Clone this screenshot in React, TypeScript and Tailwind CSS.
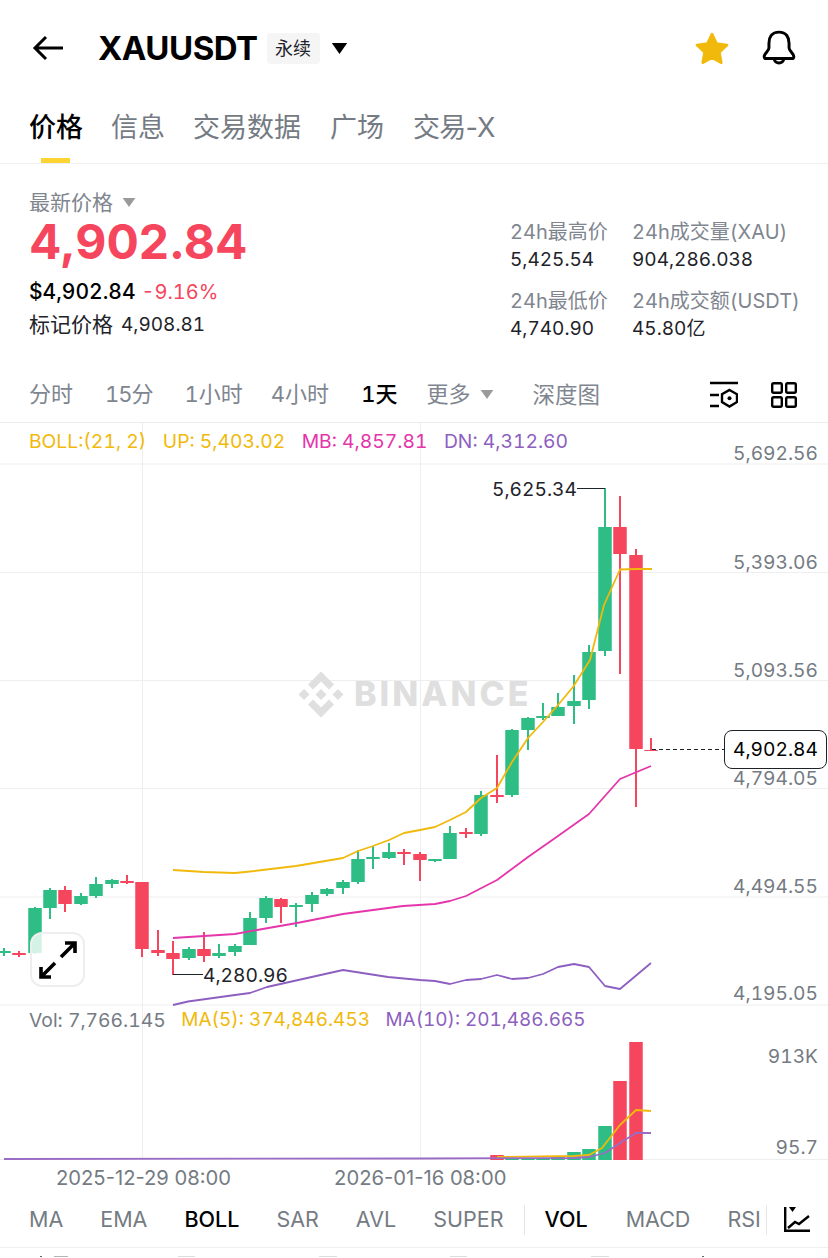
const GREEN = "#2ebd85";
const RED = "#f6465d";

// x, bodyTop, bodyBottom, wickTop, wickBottom, colour
const candles: [number, number, number, number, number, 0 | 1][] = [
  [4, 951, 953, 948, 956, 0],
  [19, 953, 955, 951, 957, 1],
  [35, 908, 953, 907, 954, 0],
  [50, 890, 908, 888, 919, 0],
  [65, 890, 904, 886, 912, 1],
  [81, 896, 904, 893, 905, 0],
  [96, 884, 896, 877, 898, 0],
  [112, 880, 884, 879, 888, 0],
  [127, 881, 883, 875, 884, 1],
  [142, 882, 949, 882, 957, 1],
  [158, 950, 953, 930, 956, 1],
  [173, 953, 959, 941, 975, 1],
  [189, 949, 958, 947, 960, 0],
  [204, 949, 956, 932, 962, 1],
  [219, 953, 956, 944, 958, 0],
  [235, 946, 952, 944, 956, 0],
  [250, 918, 945, 912, 945, 0],
  [266, 898, 918, 896, 923, 0],
  [281, 899, 907, 898, 923, 1],
  [296, 905, 907, 903, 927, 0],
  [312, 895, 904, 892, 912, 0],
  [327, 889, 894, 888, 896, 0],
  [343, 882, 888, 880, 894, 0],
  [358, 859, 882, 850, 884, 0],
  [373, 857, 859, 846, 869, 0],
  [389, 852, 858, 843, 859, 0],
  [404, 852, 854, 849, 865, 1],
  [420, 854, 860, 852, 881, 1],
  [435, 859, 861, 859, 862, 0],
  [450, 833, 859, 826, 859, 0],
  [466, 832, 834, 828, 838, 1],
  [481, 795, 834, 791, 836, 0],
  [497, 795, 797, 755, 803, 1],
  [512, 730, 795, 729, 797, 0],
  [528, 718, 730, 717, 750, 0],
  [543, 716, 718, 703, 720, 0],
  [558, 707, 716, 693, 716, 0],
  [574, 701, 706, 675, 724, 0],
  [589, 652, 700, 645, 709, 0],
  [605, 527, 651, 488, 656, 0],
  [620, 527, 554, 496, 674, 1],
  [636, 555, 749, 549, 807, 1],
  [651, 750, 751, 738, 751, 1],
];

const up = "173,870 204,872 235,873 250,871.5 296,866 343,858 358,851 373,846 389,840 404,833 420,830 435,827 450,820 466,812 481,798 497,788 512,762 528,738 543,722 558,705 573,687 590,660 604,605 620,569.5 636,569 652,569";
const mb = "173,938 204,936 235,934 257,930 297,923 343,914 373,910 403,906 435,904 450,901 466,896 497,880 528,857 558,836 589,814 620,779 651,766";
const dn = "173,1005 188,1001.5 235,995 250,993 267,987 343,970 388,977 420,980 435,981 450,984 466,980 481,979 497,975 512,979 528,978 543,974 558,967 574,964 589,967 605,986 620,989 651,963";
const volMa5 = "497,1157 574,1156 589,1155 602,1148 620,1125 636,1110 651,1111";
const volMa10 = "4,1159 420,1158.5 574,1158 589,1157 605,1153 620,1143 636,1133 651,1133";

const volBars: [number, number, 0 | 1][] = [
  [497, 1155, 1],
  [512, 1158, 0],
  [528, 1158, 0],
  [543, 1158, 0],
  [558, 1157, 0],
  [574, 1152, 0],
  [589, 1149, 0],
  [605, 1126, 0],
  [620, 1081, 1],
  [636, 1042, 1],
];

const axis: [string, number][] = [
  ["5,692.56", 453],
  ["5,393.06", 562],
  ["5,093.56", 670],
  ["4,794.05", 778],
  ["4,494.55", 886],
  ["4,195.05", 993],
  ["913K", 1056],
  ["95.7", 1147],
];

const sans = "font-['Inter','Noto_Sans_CJK_SC',sans-serif]";

function Caret({ className }: { className: string }) {
  return (
    <svg viewBox="0 0 14 10" className={className}>
      <path d="M0 0H14L7 10Z" fill="currentColor" />
    </svg>
  );
}

function Stat({ label, value }: { label: string; value: string }) {
  return (
    <div className="flex flex-col">
      <span className="h-[27px] text-[20px] leading-[27px] text-[#80868f] whitespace-nowrap">{label}</span>
      <span className="h-[27px] text-[19px] leading-[27px] text-[#1e2329] whitespace-nowrap">{value}</span>
    </div>
  );
}

function Chart() {
  return (
    <svg viewBox="0 423 828 737" className="absolute inset-0 h-full w-full">
      {[464, 572.5, 680.5, 788.5, 897, 1005, 1159.5].map((y) => (
        <line key={y} x1="0" x2="828" y1={y} y2={y} stroke="#eeeeee" />
      ))}
      <line x1="142.5" x2="142.5" y1="423" y2="1160" stroke="#eeeeee" />
      <line x1="420.5" x2="420.5" y1="423" y2="1160" stroke="#eeeeee" />

      {/* Binance mark */}
      <g fill="#dfdfdf" transform="translate(321 694.5)">
        <path d="M-5.5 0 0-5.5 5.5 0 0 5.5Z" />
        <path d="M-22.5 0-17 -5.5-11.5 0-17 5.500Z" />
        <path d="M22.500 0 17 -5.500 11.500 0 17 5.500Z" />
        <path d="M0-23 13-10 8-5 0-13-8-5-13-10Z" />
        <path d="M0 23 13 10 8 5 0 13-8 5-13 10Z" />
      </g>

      {candles.map(([x, t, b, wt, wb, c]) => (
        <g key={x} fill={c ? RED : GREEN}>
          <rect x={x - 1} y={wt} width="2" height={wb - wt} />
          <rect x={x - 6.75} y={t} width="13.5" height={b - t} />
        </g>
      ))}

      {volBars.map(([x, t, c]) => (
        <rect key={x} x={x - 6.75} y={t} width="13.5" height={1160 - t} fill={c ? RED : GREEN} />
      ))}

      <g fill="none" strokeWidth="1.800" strokeLinejoin="round">
        <polyline points={up} stroke="#f0b90b" />
        <polyline points={mb} stroke="#e535ab" />
        <polyline points={dn} stroke="#8d5fc0" />
        <polyline points={volMa5} stroke="#f0b90b" />
        <polyline points={volMa10} stroke="#9a6cc6" />
      </g>

      <path d="M605 488.500H577" stroke="#1e2329" fill="none" />
      <path d="M173 974.500H203" stroke="#1e2329" fill="none" />
      <path d="M652 749.500H724" stroke="#1e2329" strokeDasharray="4 3" fill="none" />
    </svg>
  );
}

export default function App() {
  return (
    <div className={`h-[1258px] w-[828px] overflow-hidden bg-white tabular-nums ${sans}`}>
      {/* Header */}
      <header className="flex h-[96px] items-center pl-[32px] pr-[31px]">
        <svg viewBox="0 0 32 26" className="h-[26px] w-[32px] text-black" fill="none" stroke="currentColor" strokeWidth="3">
          <path d="M31 13H3M14 2 3 13 14 24" />
        </svg>
        <h1 className="ml-[34px] text-[33px] font-bold leading-none tracking-[-0.5px] text-black">XAUUSDT</h1>
        <span className="ml-[9px] flex h-[31px] w-[53px] items-center justify-center rounded-[4px] bg-[#f5f5f5] text-[18px] text-[#1e2329]">永续</span>
        <Caret className="ml-[11px] h-[11px] w-[17px] text-black" />
        <svg viewBox="0 0 24 24" className="ml-auto h-[36px] w-[36px]">
          <path d="M12 2.800 15 9.100 22 10 16.900 14.900 18.200 21.800 12 18.400 5.800 21.800 7.100 14.900 2 10 9 9.100Z" fill="#f0b90b" stroke="#f0b90b" strokeWidth="1.800" strokeLinejoin="round" />
        </svg>
        <svg viewBox="0 0 34 34" className="ml-[31px] h-[36px] w-[36px]" fill="none" stroke="black" strokeWidth="2.800" strokeLinejoin="round">
          <path d="M17 2C10 2 7.500 7 7.500 12.500V17C7.500 20 3 22 3 25C3 26.500 4 27 5 27H29C30 27 31 26.500 31 25C31 22 26.500 20 26.500 17V12.500C26.500 7 24 2 17 2Z" />
          <path d="M12.500 27C12.500 32.500 21.500 32.500 21.500 27" />
        </svg>
      </header>

      {/* Tabs */}
      <nav className="flex h-[68px] items-start border-b border-[#f0f0f0] pl-[29px] text-[27px] leading-[63px] text-[#757b83] normal-nums">
        <div className="relative mr-[28px] h-[67px] font-medium text-black">
          价格
          <div className="absolute bottom-0 left-[12px] h-[5px] w-[29px] bg-[#fcd535]" />
        </div>
        <span className="mr-[28px]">信息</span>
        <span className="mr-[29px]">交易数据</span>
        <span className="mr-[29px]">广场</span>
        <span className="tracking-[-0.8px]">交易-X</span>
      </nav>

      {/* Price */}
      <section className="flex h-[195px] justify-between pl-[29px] pr-[31px] pt-[24px]">
        <div className="flex flex-col">
          <div className="flex h-[29px] items-center text-[21px] text-[#80868f]">
            最新价格
            <Caret className="ml-[9px] h-[9px] w-[14px] text-[#9a9a9a]" />
          </div>
          <div className="h-[50px] text-[48px] font-bold leading-[50px] text-[#f6465d] normal-nums">4,902.84</div>
          <div className="mt-[11px] flex h-[28px] items-center text-[21px]">
            <span className="font-medium text-black">$4,902.84</span>
            <span className="ml-[6px] text-[20px] text-[#f6465d]">-9.16%</span>
          </div>
          <div className="mt-[5px] flex h-[28px] items-center text-[21px] text-[#1e2329]">
            标记价格
            <span className="ml-[8px] text-[19px]">4,908.81</span>
          </div>
        </div>
        <div className="grid grid-cols-[122px_165px] content-start gap-y-[15px] pt-[31px]">
          <Stat label="24h最高价" value="5,425.54" />
          <Stat label="24h成交量(XAU)" value="904,286.038" />
          <Stat label="24h最低价" value="4,740.90" />
          <Stat label="24h成交额(USDT)" value="45.80亿" />
        </div>
      </section>

      {/* Timeframes */}
      <div className="flex h-[64px] items-center border-b border-[#ececec] pl-[29px] pr-[31px] pt-[8px] text-[22px] text-[#80868f]">
        <span>分时</span>
        <span className="ml-[32px] tracking-[-1px]">15分</span>
        <span className="ml-[32px]">1小时</span>
        <span className="ml-[28px]">4小时</span>
        <span className="ml-[32px] font-medium text-black">1天</span>
        <span className="ml-[29px] flex items-center">
          更多
          <Caret className="ml-[10px] h-[9px] w-[14px] text-[#9a9a9a]" />
        </span>
        <span className="ml-[38px] text-[22.500px]">深度图</span>
        <svg viewBox="0 0 28 28" className="ml-auto h-[28px] w-[28px]" fill="none" stroke="black" strokeWidth="2.400">
          <path d="M0 2H28M0 14H9M0 25H9" />
          <path d="M19.500 9 27 13.200V21L19.500 25.500 12 21V13.200Z" />
          <circle cx="19.500" cy="17.200" r="2" fill="black" stroke="none" />
        </svg>
        <svg viewBox="0 0 26 26" className="ml-[33px] h-[26px] w-[26px]" fill="none" stroke="black" strokeWidth="2.400">
          <rect x="1.200" y="1.200" width="9.600" height="9.600" rx="1.500" />
          <rect x="15.200" y="1.200" width="9.600" height="9.600" rx="1.500" />
          <rect x="1.200" y="15.200" width="9.600" height="9.600" rx="1.500" />
          <rect x="15.200" y="15.200" width="9.600" height="9.600" rx="1.500" />
        </svg>
      </div>

      {/* Chart */}
      <div className="relative h-[737px] text-[19.300px]">
        <Chart />
        <div className="absolute left-[29px] top-[5px] flex gap-[16.500px] leading-[26px] whitespace-nowrap">
          <span className="text-[#f0b90b]">BOLL:(21, 2)</span>
          <span className="text-[#f0b90b]">UP: 5,403.02</span>
          <span className="text-[#e535ab]">MB: 4,857.81</span>
          <span className="text-[#8d5fc0]">DN: 4,312.60</span>
        </div>
        <div className="absolute left-[29px] top-[584px] flex gap-[15.500px] leading-[26px] whitespace-nowrap">
          <span className="text-[#757b83]">Vol: 7,766.145</span>
          <span className="text-[19px] text-[#f0b90b]">MA(5): 374,846.453</span>
          <span className="text-[18.900px] text-[#8d5fc0]">MA(10): 201,486.665</span>
        </div>
        {axis.map(([label, y]) => (
          <span
            key={label}
            className="absolute right-[10px] text-[19.200px] leading-[24px] text-[#757b83]"
            style={{ top: y - 423 - 12 }}
          >
            {label}
          </span>
        ))}
        <span className="absolute left-[354px] top-[249px] text-[34px] font-extrabold leading-[44px] tracking-[3px] text-[#dfdfdf]">BINANCE</span>
        <span className="absolute left-[492px] top-[54px] text-[19.200px] leading-[24px] text-[#1e2329]">5,625.34</span>
        <span className="absolute left-[203px] top-[540px] text-[19.200px] leading-[24px] text-[#1e2329]">4,280.96</span>
        <span className="absolute left-[724px] top-[307px] flex h-[39px] w-[103px] items-center justify-center rounded-[8px] border border-[#1e2329] bg-white text-[19.200px] text-black">
          4,902.84
        </span>
        <div className="absolute left-[30px] top-[509px] flex h-[55px] w-[55px] items-center justify-center rounded-[12px] border-2 border-[#eeeeee] bg-white/80">
          <svg viewBox="0 0 38 38" className="h-[38px] w-[38px]" fill="none" stroke="black" strokeWidth="3.600">
            <path d="M22 16 36 2M26 2H36V12M16 22 2 36M2 26V36H12" />
          </svg>
        </div>
      </div>

      {/* Dates */}
      <div className="flex h-[36px] items-center pl-[56px] text-[20.200px] text-[#757b83] normal-nums">
        <span>2025-12-29 08:00</span>
        <span className="ml-[103px]">2026-01-16 08:00</span>
      </div>

      {/* Indicators */}
      <div className="flex h-[52px] items-center border-b border-[#f0f0f0] pb-[4px] pl-[29px] pr-[18px] text-[21.500px] text-[#757b83]">
        <span>MA</span>
        <span className="ml-[37px]">EMA</span>
        <span className="ml-[37px] font-medium text-black">BOLL</span>
        <span className="ml-[37px]">SAR</span>
        <span className="ml-[37px]">AVL</span>
        <span className="ml-[37px]">SUPER</span>
        <div className="ml-[20px] h-[30px] w-px bg-[#e6e6e6]" />
        <span className="ml-[20px] font-medium text-black">VOL</span>
        <span className="ml-[38px]">MACD</span>
        <span className="ml-[37px]">RSI</span>
        <div className="ml-[5px] h-[30px] w-px bg-[#e6e6e6]" />
        <svg viewBox="0 0 26 25" className="ml-auto h-[25px] w-[26px]" fill="none" stroke="black" strokeWidth="2.400">
          <path d="M1.200 0V23.800H26" />
          <path d="M4 21 11 15 15 17 25 9" />
          <path d="M5 0H12L8.500 5Z" fill="black" stroke="none" />
        </svg>
      </div>

      {/* Tops of the next row, cut by the edge of the page */}
      <div className="flex h-[1px] translate-y-[8px] items-start pl-[40px]">
        <div className="h-px w-[2px] bg-[#666666]" />
        <div className="ml-[12px] h-px w-[14px] bg-[#b5b5b5]" />
        <div className="ml-[110px] h-px w-[17px] bg-[#dddddd]" />
        <div className="ml-[124px] h-px w-[18px] bg-[#dddddd]" />
        <div className="ml-[113px] h-px w-[17px] bg-[#dddddd]" />
        <div className="ml-[124px] h-px w-[18px] bg-[#dddddd]" />
        <div className="ml-[93px] h-px w-[2px] bg-[#666666]" />
      </div>
    </div>
  );
}
